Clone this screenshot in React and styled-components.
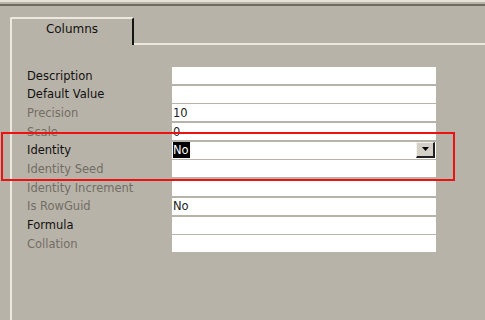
import { Fragment } from "react";
import styled, { createGlobalStyle } from "styled-components";

//==============================================================================
// STYLING
//==============================================================================
const Global = createGlobalStyle`
  html, body {
    margin: 0;
    padding: 0;
    background: #b8b3a8;
  }
`

const Frame = styled.div`
  position: relative;
  width: 485px;
  height: 320px;
  overflow: hidden;
  background: #b8b3a8;
  font-family: "DejaVu Sans", Verdana, sans-serif;
  font-size: 11.5px;
  color: #111;
  border-top: 2px solid #e6e2da;
  box-sizing: border-box;
`

const TopRule = styled.div`
  height: 2px;
  margin-top: 2px;
  background: #6f6b63;
`

const TabStrip = styled.div`
  display: flex;
  align-items: flex-end;
  height: 39px;
`

const Gap = styled.div`
  width: 10px;
  align-self: stretch;
`

const Tab = styled.div`
  width: 124px;
  height: 28px;
  box-sizing: border-box;
  border-top: 2px solid #ece8e0;
  border-left: 2px solid #ece8e0;
  border-right: 2px solid #141414;
  border-radius: 2px 2px 0 0;
  display: flex;
  justify-content: center;
  padding-top: 3px;
  font-size: 12px;
  color: #111;
`

const Filler = styled.div`
  flex: 1;
  height: 2px;
  background: #ece8e0;
`

const Panel = styled.div`
  margin-left: 10px;
  height: 300px;
  border-left: 2px solid #ece8e0;
  padding: 22px 0 0 15px;
`

const Grid = styled.div`
  display: grid;
  grid-template-columns: 145px 264px;
  grid-auto-rows: 18.7px;
`

const Label = styled.div`
  display: flex;
  align-items: center;
  height: 17px;
  color: ${props => props.$muted ? '#726d65' : '#111'};
  white-space: nowrap;
`

const Field = styled.div`
  position: relative;
  height: 17px;
  background: #ffffff;
  display: flex;
  align-items: center;
  padding-left: 1px;
  box-sizing: border-box;
  color: #222;
`

const Selected = styled.span`
  background: #000;
  color: #fff;
  padding: 1px 1px 1px 0;
  line-height: 14px;
`

const DropButton = styled.div`
  position: absolute;
  right: 1px;
  top: 0;
  width: 19px;
  height: 16px;
  box-sizing: border-box;
  background: #d4d0c8;
  border-top: 1px solid #f4f2ee;
  border-left: 1px solid #f4f2ee;
  border-right: 2px solid #202020;
  border-bottom: 2px solid #202020;
  display: flex;
  align-items: center;
  justify-content: center;
`

const Highlight = styled.div`
  position: absolute;
  left: 1px;
  top: 130px;
  width: 450px;
  height: 45px;
  border: 2px solid #ee1111;
  pointer-events: none;
`

//==============================================================================
// DATA
//==============================================================================
const rows = [
    {label: 'Description'},
    {label: 'Default Value'},
    {label: 'Precision', muted: true, value: '10'},
    {label: 'Scale', muted: true, value: '0'},
    {label: 'Identity', value: 'No', dropdown: true},
    {label: 'Identity Seed', muted: true},
    {label: 'Identity Increment', muted: true},
    {label: 'Is RowGuid', muted: true, value: 'No'},
    {label: 'Formula'},
    {label: 'Collation', muted: true},
]

//==============================================================================
// COLUMN PROPERTIES
//==============================================================================
const App = () => {
    return (
        <Frame>
            <Global/>
            <TopRule/>
            <TabStrip>
                <Gap/>
                <Tab>Columns</Tab>
                <Filler/>
            </TabStrip>
            <Panel>
                <Grid>
                    {rows.map(row => (
                        <Fragment key={row.label}>
                            <Label $muted={row.muted}>{row.label}</Label>
                            <Field>
                                {row.dropdown
                                    ? <Selected>{row.value}</Selected>
                                    : row.value}
                                {row.dropdown && (
                                    <DropButton>
                                        <svg width="7" height="4" viewBox="0 0 7 4">
                                            <path d="M0 0h7L3.5 4z" fill="#000"/>
                                        </svg>
                                    </DropButton>
                                )}
                            </Field>
                        </Fragment>
                    ))}
                </Grid>
            </Panel>
            <Highlight/>
        </Frame>
    )
}

export default App;
